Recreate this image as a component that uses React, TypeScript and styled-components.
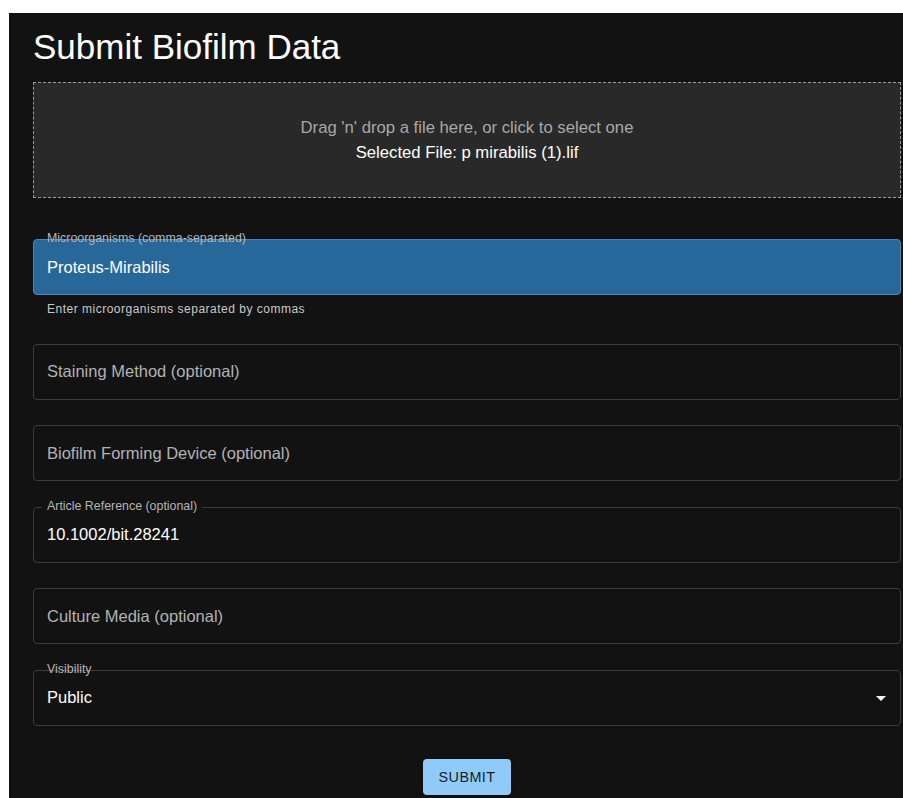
import React from 'react';
import styled, { createGlobalStyle, css } from 'styled-components';

const GlobalStyle = createGlobalStyle`
    html, body {
        margin: 0;
        padding: 0;
        background: #ffffff;
        overflow: hidden;
    }
    body {
        font-family: 'Liberation Sans', Arial, sans-serif;
    }
`;

const Panel = styled.div`
    margin: 13px 0 0 9px;
    width: 916px;
    min-height: 800px;
    box-sizing: border-box;
    padding: 12px 24px 24px;
    background: #121212;
    color: #ffffff;
    display: flex;
    flex-direction: column;
`;

const Title = styled.h1`
    margin: 0 0 14px;
    font-size: 35px;
    font-weight: 400;
    line-height: 43px;
    color: #ffffff;
`;

const DropZone = styled.div`
    height: 116px;
    box-sizing: border-box;
    border: 1.5px dashed #9a9a9a;
    background: #292929;
    display: flex;
    flex-direction: column;
    justify-content: center;
    align-items: center;
    font-size: 16.7px;
    line-height: 25px;
    cursor: pointer;
`;

const DropHint = styled.div`
    color: #a8a8a8;
`;

const SelectedFile = styled.div`
    color: #ffffff;
`;

const Fields = styled.div`
    margin-top: 41px;
    display: flex;
    flex-direction: column;
    gap: 25.5px;
`;

const FieldGroup = styled.div`
    display: flex;
    flex-direction: column;
`;

const Field = styled.div<{ $highlight?: boolean }>`
    position: relative;
    height: 56px;
    box-sizing: border-box;
    border: 1px solid #3c3c3c;
    border-radius: 4px;
    padding: 0 14px 0 13px;
    display: flex;
    align-items: center;
    font-size: 16.5px;

    ${(props) =>
        props.$highlight &&
        css`
            background: #28679a;
            border-color: #4f86b8;
        `}
`;

// small label sitting on the top border of a filled field
const FloatLabel = styled.span<{ $notched?: boolean }>`
    position: absolute;
    top: -8px;
    font-size: 12.4px;
    line-height: 13px;
    color: #b4b4b4;
    white-space: nowrap;

    ${(props) =>
        props.$notched
            ? css`
                  left: 8px;
                  padding: 0 5px;
                  background: #121212;
              `
            : css`
                  left: 13px;
              `}
`;

const Value = styled.span`
    flex: 1;
    color: #ffffff;
`;

const Placeholder = styled.span`
    flex: 1;
    color: #b3b3b3;
`;

const HelperText = styled.div`
    margin: 6px 14px 0;
    font-size: 12px;
    line-height: 17px;
    letter-spacing: 0.5px;
    color: #c9c9c9;
`;

const DropArrow = styled.svg`
    width: 24px;
    height: 24px;
    margin-right: -7px;
    fill: #ffffff;
`;

const Actions = styled.div`
    margin-top: 33px;
    display: flex;
    justify-content: center;
`;

const SubmitButton = styled.button`
    height: 36px;
    padding: 6px 16px;
    border: none;
    border-radius: 4px;
    background: #90caf9;
    color: rgba(0, 0, 0, 0.87);
    font-family: 'Liberation Sans', Arial, sans-serif;
    font-size: 14.4px;
    font-weight: 500;
    letter-spacing: 0.4px;
    text-transform: uppercase;
    box-shadow: 0 3px 1px -2px rgba(0, 0, 0, 0.2), 0 2px 2px 0 rgba(0, 0, 0, 0.14), 0 1px 5px 0 rgba(0, 0, 0, 0.12);
    cursor: pointer;
`;

function App() {
    return (
        <>
            <GlobalStyle />
            <Panel>
                <Title>Submit Biofilm Data</Title>

                <DropZone>
                    <DropHint>Drag 'n' drop a file here, or click to select one</DropHint>
                    <SelectedFile>Selected File: p mirabilis (1).lif</SelectedFile>
                </DropZone>

                <Fields>
                    <FieldGroup>
                        <Field $highlight>
                            <FloatLabel>Microorganisms (comma-separated)</FloatLabel>
                            <Value>Proteus-Mirabilis</Value>
                        </Field>
                        <HelperText>Enter microorganisms separated by commas</HelperText>
                    </FieldGroup>

                    <Field>
                        <Placeholder>Staining Method (optional)</Placeholder>
                    </Field>

                    <Field>
                        <Placeholder>Biofilm Forming Device (optional)</Placeholder>
                    </Field>

                    <Field>
                        <FloatLabel $notched>Article Reference (optional)</FloatLabel>
                        <Value>10.1002/bit.28241</Value>
                    </Field>

                    <Field>
                        <Placeholder>Culture Media (optional)</Placeholder>
                    </Field>

                    <Field>
                        <FloatLabel>Visibility</FloatLabel>
                        <Value>Public</Value>
                        <DropArrow viewBox="0 0 24 24">
                            <path d="M7 10l5 5 5-5z" />
                        </DropArrow>
                    </Field>
                </Fields>

                <Actions>
                    <SubmitButton>Submit</SubmitButton>
                </Actions>
            </Panel>
        </>
    );
}

export default App;
